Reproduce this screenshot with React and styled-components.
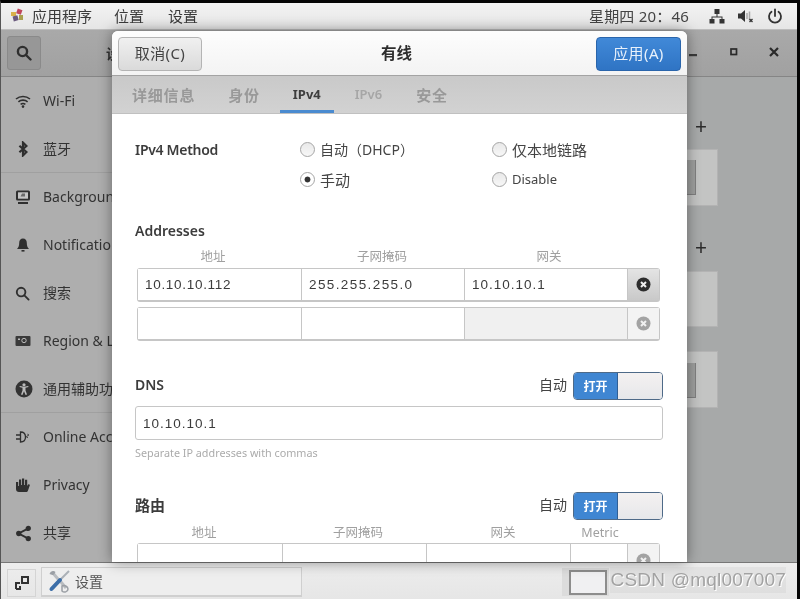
import React from "react";
import styled, { createGlobalStyle } from "styled-components";

const sans = `"Noto Sans", "Noto Sans CJK SC", sans-serif`;

const Global = createGlobalStyle`
  html, body { margin: 0; padding: 0; background: #000; }
  body { width: 800px; height: 599px; overflow: hidden; font-family: ${sans}; }
  * { box-sizing: border-box; }
`;

const Screen = styled.div`
  position: relative;
  width: 800px;
  height: 599px;
  display: flex;
  flex-direction: column;
  border-top: 3px solid #050505;
  border-right: 3px solid #050505;
  border-left: 1px solid #555;
  overflow: hidden;
  filter: blur(0.45px);
`;

const TopBar = styled.header`
  height: 27px;
  flex: none;
  display: flex;
  align-items: center;
  padding: 0 14px 2px 8px;
  color: #3a3a3a;
  font-size: 15px;
  background: linear-gradient(#f3f3f3, #e6e6e6);
  border-bottom: 1px solid #bdbdbd;
`;
const MenuItem = styled.span`
  margin-left: ${p => p.$gap}px;
`;
const Clock = styled.span`
  margin-left: auto;
  letter-spacing: 0.2px;
  color: #444;
`;
const TrayIcon = styled.span`
  display: flex;
  margin-left: ${p => p.$gap}px;
  margin-top: 2px;
`;

const Main = styled.div`
  position: relative;
  flex: 1;
  min-height: 0;
  display: flex;
  flex-direction: column;
  background: #a7a9a9;
`;
const WinHeader = styled.div`
  height: 47px;
  flex: none;
  display: flex;
  align-items: center;
  padding: 0 0 0 6px;
  background: linear-gradient(#a9a9a9, #a1a1a1);
  border-bottom: 1px solid #858585;
`;
const SearchBtn = styled.div`
  width: 34px;
  height: 34px;
  display: flex;
  align-items: center;
  justify-content: center;
  background: #979797;
  border: 1px solid #8a8a8a;
  border-radius: 3px;
`;
const WinTitle = styled.span`
  margin-left: 65px;
  font-size: 14px;
  font-weight: 700;
  color: #333;
`;
const WinControls = styled.div`
  margin-left: auto;
  display: grid;
  grid-template-columns: repeat(3, 40px);
  justify-items: center;
  margin-right: 3px;
  margin-top: -2px;
  color: #2e2e2e;
`;
const WinBody = styled.div`
  flex: 1;
  min-height: 0;
  display: flex;
`;
const Sidebar = styled.nav`
  width: 111px;
  flex: none;
  background: #aeaeae;
  color: #333;
  font-size: 14px;
`;
const SideItem = styled.div`
  height: 48px;
  display: flex;
  align-items: center;
  white-space: nowrap;
  padding-left: 14px;
  padding-bottom: 2px;
  border-bottom: ${p => (p.$sep ? "1px solid #a0a0a0" : "none")};
`;
const SideIcon = styled.span`
  width: 28px;
  flex: none;
  display: flex;
  margin-top: 2px;
`;
const Panel = styled.div`
  flex: 1;
  display: flex;
  flex-direction: column;
  align-items: flex-end;
  padding: 38px 79px 0 0;
`;
const Plus = styled.div`
  width: 34px;
  text-align: center;
  height: 22px;
  line-height: 22px;
  font-size: 21px;
  color: #2c2c2c;
  margin-top: ${p => p.$top}px;
`;
const GhostCard = styled.div`
  width: 100px;
  height: ${p => p.$h}px;
  margin-top: ${p => p.$top}px;
  background: #c3c4c3;
  border: 1px solid #b3b3b3;
  display: flex;
  justify-content: flex-end;
  align-items: flex-start;
  padding-top: ${p => p.$inner}px;
  padding-right: 21px;
`;
const GhostBtn = styled.div`
  width: 9px;
  height: 35px;
  background: #9e9f9e;
  border-right: 1px solid #808080;
  border-bottom: 1px solid #808080;
`;

const Dialog = styled.section`
  position: absolute;
  left: 111px;
  top: 1px;
  width: 575px;
  bottom: 0;
  background: #fff;
  border-radius: 6px 6px 0 0;
  box-shadow: 0 0 14px rgba(0, 0, 0, 0.42);
  overflow: hidden;
  color: #3a3a3a;
  font-size: 14px;
`;
const DlgHeader = styled.div`
  height: 45px;
  display: flex;
  align-items: center;
  justify-content: space-between;
  padding: 2px 6px 0 6px;
  background: linear-gradient(#fdfdfd, #f3f3f3);
  border-bottom: 1px solid #a3a3a3;
`;
const DlgTitle = styled.span`
  font-weight: 700;
  font-size: 15.5px;
  color: #2e2e2e;
  margin: -3px 5px 0 0;
`;
const DlgButton = styled.button`
  width: ${p => (p.$primary ? 85 : 84)}px;
  height: 34px;
  padding: 0 0 3px;
  font: inherit;
  font-size: 15px;
  letter-spacing: 0.4px;
  border-radius: 4px;
  color: ${p => (p.$primary ? "#e8f1fb" : "#444")};
  background: ${p => (p.$primary ? "linear-gradient(#4189d8, #2f74c4)" : "linear-gradient(#f0f0f0, #dadada)")};
  border: 1px solid ${p => (p.$primary ? "#2a65ab" : "#b4b4b4")};
`;
const Tabs = styled.div`
  height: 38px;
  display: flex;
  background: linear-gradient(#c9c9c9, #d2d2d2);
  border-bottom: 1px solid #c0c0c0;
  padding-left: 7px;
`;
const Tab = styled.div`
  display: flex;
  align-items: center;
  justify-content: center;
  padding: 2px ${p => p.$pad}px 0;
  font-size: ${p => (p.$cjk ? 15 : 13)}px;
  font-weight: ${p => (p.$active ? 700 : 600)};
  color: ${p => (p.$active ? "#3e3e3e" : p.$faint ? "#a6a6a6" : "#999")};
  border-bottom: ${p => (p.$active ? "3px solid #4a8bd0" : "3px solid transparent")};
  letter-spacing: ${p => (p.$cjk ? "0.8px" : 0)};
`;
const Body = styled.div`
  padding: 20px 24px 0 23px;
`;
const MethodGrid = styled.div`
  display: grid;
  grid-template-columns: 165px 192px 1fr;
  grid-auto-rows: 30px;
  align-items: center;
  margin-bottom: 27px;
`;
const FieldLabel = styled.div`
  font-weight: 600;
  font-size: ${p => p.$size || 14}px;
  letter-spacing: ${p => p.$track || 0}px;
  color: #3c3c3c;
`;
const RowLabel = styled(FieldLabel)`
  margin-bottom: 4px;
`;
const Radio = styled.label`
  display: flex;
  align-items: center;
  gap: 5px;
  font-size: ${p => p.$size || 14}px;
  color: #444;
`;
const RadioDot = styled.span`
  width: 15px;
  height: 15px;
  border-radius: 50%;
  border: 1px solid #a5a5a5;
  background: ${p => (p.$on ? "radial-gradient(circle, #333 0 2.6px, #fff 3.3px)" : "linear-gradient(#e9e9e9, #f7f7f7)")};
`;
const SectionTitle = styled(FieldLabel)`
  height: 20px;
  line-height: 20px;
`;
const Columns = styled.div`
  display: grid;
  grid-template-columns: ${p => p.$cols};
  margin: ${p => p.$top}px 3px ${p => p.$bottom}px 2px;
  height: 14px;
  line-height: 14px;
  font-size: 12.5px;
  color: #a0a0a0;
  text-align: center;
`;
const Row = styled.div`
  display: grid;
  grid-template-columns: ${p => p.$cols};
  height: ${p => p.$h || 34}px;
  margin: 0 3px ${p => (p.$last ? 0 : 5)}px 2px;
  border: 1px solid #c6c6c6;
  border-bottom-width: 2px;
  border-radius: 3px;
`;
const Cell = styled.div`
  display: flex;
  align-items: center;
  padding-left: 7px;
  font-family: "Liberation Sans", sans-serif;
  font-size: 13.5px;
  letter-spacing: ${p => p.$track || 0.7}px;
  color: #3b3b3b;
  border-right: 1px solid #c6c6c6;
  background: ${p => (p.$off ? "#f0f0f0" : "#fff")};
`;
const RemoveCell = styled.div`
  display: flex;
  align-items: ${p => (p.$top ? "flex-start" : "center")};
  padding-top: ${p => (p.$top ? 9 : 0)}px;
  justify-content: center;
  background: ${p => (p.$on ? "linear-gradient(#e4e4e4, #c9c9c9)" : "#f3f3f3")};
`;
const OptionRow = styled.div`
  display: flex;
  align-items: center;
  height: 28px;
  margin-top: ${p => p.$top}px;
`;
const Auto = styled.span`
  margin: 0 6px 4px auto;
  font-size: 14px;
  color: #444;
`;
const Switch = styled.div`
  width: 90px;
  height: 28px;
  display: flex;
  border: 1px solid #4e6a88;
  border-radius: 4px;
  overflow: hidden;
  font-size: 12px;
  font-weight: 700;
`;
const SwitchOn = styled.span`
  width: 44px;
  display: flex;
  align-items: center;
  justify-content: center;
  background: #3f86d2;
  color: #fff;
  border-right: 1px solid #2f5f95;
`;
const SwitchOff = styled.span`
  flex: 1;
  background: linear-gradient(#f4f1f1, #e6e7ea);
`;
const TextInput = styled.div`
  height: 34px;
  margin-top: 6px;
  display: flex;
  align-items: center;
  padding-left: 7px;
  border: 1px solid #c6c6c6;
  border-radius: 3px;
  font-family: "Liberation Sans", sans-serif;
  font-size: 13.5px;
  letter-spacing: 1px;
  color: #3b3b3b;
`;
const Hint = styled.div`
  height: 14px;
  line-height: 14px;
  margin-top: 6px;
  font-size: 10.8px;
  color: #ababab;
`;

const BottomBar = styled.footer`
  height: 37px;
  flex: none;
  display: flex;
  align-items: center;
  padding-left: 6px;
  background: linear-gradient(#ededed, #e6e6e6);
  border-top: 1px solid #777;
`;
const ShowDesktop = styled.div`
  width: 29px;
  height: 28px;
  display: flex;
  align-items: center;
  justify-content: center;
  border: 1px solid #d4d4d4;
  margin-top: 3px;
`;
const TaskItem = styled.div`
  width: 261px;
  height: 30px;
  margin-left: 5px;
  margin-top: 2px;
  display: flex;
  align-items: center;
  gap: 4px;
  padding: 0 0 2px 6px;
  font-size: 14px;
  color: #555;
  background: #eeeeee;
  border: 1px solid #cfcfcf;
  border-bottom-width: 2px;
`;
const Pager = styled.div`
  margin-left: auto;
  margin-right: 188px;
  width: 47px;
  height: 28px;
  margin-top: 2px;
  padding-left: 7px;
  background: #dcdcdc;
  display: flex;
  align-items: center;
`;
const PagerBox = styled.div`
  width: 38px;
  height: 25px;
  background: #f0f0f2;
  border: 2px solid #8d8d8d;
`;
const Watermark = styled.div`
  position: absolute;
  right: 11px;
  bottom: 6px;
  height: 26px;
  line-height: 26px;
  padding: 0 0 0 1px;
  font-family: "Liberation Sans", sans-serif;
  font-size: 19px;
  letter-spacing: 0.2px;
  color: #a2a2a2;
  background: rgba(190, 190, 190, 0.2);
  text-shadow: 1px 1px 0 #fff;
`;

const Dark = "#2f2f2f";

const SearchIcon = ({ size = 16, w = 2.4 }) => (
  <svg width={size} height={size} viewBox="0 0 16 16" fill="none" stroke={Dark} strokeWidth={w} strokeLinecap="round">
    <circle cx="6.5" cy="6.5" r="4.6" />
    <path d="M10 10l4.5 4.5" />
  </svg>
);
const WifiIcon = () => (
  <svg width="16" height="16" viewBox="0 0 16 16" fill="none" stroke={Dark} strokeWidth="1.6">
    <path d="M1 6c4-3.4 10-3.4 14 0M3.4 8.8c2.6-2.2 6.6-2.2 9.2 0M5.6 11.3c1.4-1 3.4-1 4.8 0" />
    <circle cx="8" cy="13.6" r="1.3" fill={Dark} stroke="none" />
  </svg>
);
const BluetoothIcon = () => (
  <svg width="16" height="16" viewBox="0 0 16 16" fill="none" stroke={Dark} strokeWidth="2.2">
    <path d="M4.4 4.8l7 6.2L8 14.4V1.6L11.4 5l-7 6.2" />
  </svg>
);
const MonitorIcon = () => (
  <svg width="16" height="16" viewBox="0 0 16 16">
    <rect x="1" y="1.5" width="14" height="10" rx="1.5" fill={Dark} />
    <rect x="3" y="3.3" width="10" height="6.4" fill="#c4c4c4" />
    <path d="M7 4.5h3v3H5.5z" fill="#6a6a6a" />
    <rect x="3" y="13" width="10" height="2" fill={Dark} />
  </svg>
);
const BellIcon = () => (
  <svg width="16" height="16" viewBox="0 0 16 16" fill={Dark}>
    <path d="M8 1.5c2.4 0 3.8 1.8 3.8 4.2 0 3 .7 4.6 2.2 6.3H2c1.5-1.7 2.2-3.3 2.2-6.3C4.2 3.3 5.6 1.5 8 1.5z" />
    <rect x="6.5" y="13" width="3" height="1.6" />
  </svg>
);
const RegionIcon = () => (
  <svg width="16" height="16" viewBox="0 0 16 16">
    <rect x="0.5" y="3" width="15" height="10" rx="1" fill="#3a3a3a" />
    <circle cx="9" cy="7.5" r="2.2" fill="none" stroke="#bbb" strokeWidth="1" />
    <rect x="3" y="5.5" width="2" height="1.5" fill="#bbb" />
  </svg>
);
const AccessIcon = () => (
  <svg width="18" height="18" viewBox="0 0 18 18">
    <circle cx="9" cy="9" r="8.5" fill="#333" />
    <circle cx="9" cy="4.8" r="1.6" fill="#bbb" />
    <path d="M4.5 7l3 .8v2.600L6 14.500l1.400.4L9 11.200l1.600 3.700 1.400-.4-1.500-4.100V7.800l3-.8-.3-1.100L9 6.800 4.800 5.900z" fill="#bbb" />
  </svg>
);
const PlugIcon = () => (
  <svg width="16" height="16" viewBox="0 0 16 16" fill="none" stroke={Dark} strokeWidth="1.3">
    <path d="M5.5 3v10c3.200 0 5-2.200 5-5s-1.800-5-5-5zM1 6h4.500M1 10h4.500" />
    <path d="M12.5 5.200c1.500 0 1.500 1.500 0 1.700s-1.300 1.800.3 1.700" strokeWidth="1" />
  </svg>
);
const HandIcon = () => (
  <svg width="16" height="16" viewBox="0 0 16 16" fill={Dark}>
    <path d="M1 5h2.200v4H4V2.500h2.200V8H7V1.500h2.200V8H10V2.800h2.200V9l1-1.800 1.800.6L13 13.500c-.4 1-1 1.500-2 1.500H4c-1.800 0-3-1-3-3z" />
  </svg>
);
const ShareIcon = () => (
  <svg width="17" height="17" viewBox="0 0 16 16" fill={Dark} stroke={Dark} strokeWidth="1.8">
    <path d="M12.5 3.200L3.500 8l9 4.800" fill="none" />
    <circle cx="12.5" cy="3.2" r="1.6" />
    <circle cx="3.5" cy="8" r="1.6" />
    <circle cx="12.5" cy="12.8" r="1.6" />
  </svg>
);
const RemoveIcon = ({ off }) => (
  <svg width="15" height="15" viewBox="0 0 15 15">
    <circle cx="7.5" cy="7.5" r="7" fill={off ? "#a3a3a3" : "#2d2d2d"} />
    <path d="M5 5l5 5M10 5l-5 5" stroke={off ? "#f0f0f0" : "#eee"} strokeWidth="2" />
  </svg>
);
const AppLogo = () => (
  <svg width="16" height="16" viewBox="0 0 16 16">
    <rect x="8" y="2" width="5" height="5" fill="#c0475c" transform="rotate(20 10 4)" />
    <rect x="2" y="5" width="5" height="4" fill="#d9b14a" />
    <rect x="4" y="9" width="5" height="5" fill="#6b5a7e" transform="rotate(-15 6 11)" />
    <rect x="10" y="8" width="4" height="5" fill="#a9a04e" />
  </svg>
);
const NetworkIcon = () => (
  <svg width="16" height="16" viewBox="0 0 16 16" fill="#333">
    <rect x="5.5" y="1" width="5" height="5" />
    <rect x="0.5" y="11" width="5" height="4.5" />
    <rect x="10.5" y="11" width="5" height="4.5" />
    <path d="M7.5 6h1v2.500H13.500V11h-1V9.500h-9V11h-1V8.500H7.500z" />
  </svg>
);
const VolumeIcon = () => (
  <svg width="18" height="16" viewBox="0 0 18 16">
    <path d="M1 5.500h3L8 2v12L4 10.500H1z" fill="#333" />
    <path d="M10 5v6M12.500 3.500v9" stroke="#aaa" strokeWidth="1.5" />
    <path d="M12.500 11l3 3M15.500 11l-3 3" stroke="#333" strokeWidth="1.3" />
  </svg>
);
const PowerIcon = () => (
  <svg width="16" height="16" viewBox="0 0 16 16" fill="none" stroke="#333" strokeWidth="1.8" strokeLinecap="round">
    <path d="M8 1.500v6.500" />
    <path d="M4.500 3.800a6 6 0 1 0 7 0" />
  </svg>
);
const MinIcon = () => <svg width="12" height="12" viewBox="0 0 12 12"><rect x="1" y="8" width="8" height="2.2" fill="#3a3a3a" /></svg>;
const MaxIcon = () => <svg width="12" height="12" viewBox="0 0 12 12"><rect x="3" y="3" width="5.5" height="5.5" fill="none" stroke="#2a2a2a" strokeWidth="1.7" /></svg>;
const CloseIcon = () => <svg width="12" height="12" viewBox="0 0 12 12"><path d="M2 2l8 8M10 2l-8 8" stroke="#2a2a2a" strokeWidth="2.2" /></svg>;
const DesktopIcon = () => (
  <svg width="16" height="16" viewBox="0 0 16 16">
    <rect x="8" y="2" width="6" height="6" fill="none" stroke="#333" strokeWidth="2" />
    <path d="M2 14V8h4M2 14h4V11" fill="none" stroke="#333" strokeWidth="2" />
  </svg>
);
const ToolsIcon = () => (
  <svg width="23" height="24" viewBox="0 0 23 24" fill="none">
    <path d="M4 3l6 7 3 3 5 6" stroke="#b9bcc0" strokeWidth="3" />
    <path d="M1.500 5c1-3 4-4 6-2L6 5.500 4.500 6z" fill="#9b9fa5" />
    <path d="M14 17c2-1 6 0 6 3s-4 4-6 2z" fill="none" stroke="#9b9fa5" strokeWidth="1.5" />
    <path d="M21 2L11 12" stroke="#aab0b6" strokeWidth="2" />
    <path d="M12 11L3.500 20" stroke="#3c6ea8" strokeWidth="4" strokeLinecap="round" />
  </svg>
);

const sideItems = [
  [<WifiIcon />, "Wi-Fi"],
  [<BluetoothIcon />, "蓝牙", true],
  [<MonitorIcon />, "Background"],
  [<BellIcon />, "Notifications"],
  [<SearchIcon size={15} w={2} />, "搜索"],
  [<RegionIcon />, "Region & Language"],
  [<AccessIcon />, "通用辅助功能", true],
  [<PlugIcon />, "Online Accounts"],
  [<HandIcon />, "Privacy"],
  [<ShareIcon />, "共享"],
];

const addrCols = "164px 163px 163px 1fr";
const routeCols = "145px 144px 144px 57px 1fr";

export default function App() {
  return (
    <>
      <Global />
      <Screen>
        <TopBar>
          <AppLogo />
          <MenuItem $gap={7}>应用程序</MenuItem>
          <MenuItem $gap={22}>位置</MenuItem>
          <MenuItem $gap={24}>设置</MenuItem>
          <Clock>星期四 20：46</Clock>
          <TrayIcon $gap={20}><NetworkIcon /></TrayIcon>
          <TrayIcon $gap={12}><VolumeIcon /></TrayIcon>
          <TrayIcon $gap={12}><PowerIcon /></TrayIcon>
        </TopBar>
        <Main>
          <WinHeader>
            <SearchBtn><SearchIcon /></SearchBtn>
            <WinTitle>设置</WinTitle>
            <WinControls>
              <MinIcon />
              <MaxIcon />
              <CloseIcon />
            </WinControls>
          </WinHeader>
          <WinBody>
            <Sidebar>
              {sideItems.map(([icon, label, sep]) => (
                <SideItem key={label} $sep={sep}>
                  <SideIcon>{icon}</SideIcon>
                  {label}
                </SideItem>
              ))}
            </Sidebar>
            <Panel>
              <Plus $top={0}>+</Plus>
              <GhostCard $top={12} $h={57} $inner={10}><GhostBtn /></GhostCard>
              <Plus $top={30}>+</Plus>
              <GhostCard $top={13} $h={56} $inner={0} />
              <GhostCard $top={24} $h={57} $inner={11}><GhostBtn /></GhostCard>
            </Panel>
          </WinBody>
          <Dialog>
            <DlgHeader>
              <DlgButton>取消(C)</DlgButton>
              <DlgTitle>有线</DlgTitle>
              <DlgButton $primary>应用(A)</DlgButton>
            </DlgHeader>
            <Tabs>
              <Tab $pad={13} $cjk>详细信息</Tab>
              <Tab $pad={20} $cjk>身份</Tab>
              <Tab $pad={13} $active>IPv4</Tab>
              <Tab $pad={21} $faint>IPv6</Tab>
              <Tab $pad={13} $cjk>安全</Tab>
            </Tabs>
            <Body>
              <MethodGrid>
                <FieldLabel $track={-0.3}>IPv4 Method</FieldLabel>
                <Radio><RadioDot />自动（DHCP）</Radio>
                <Radio $size={15}><RadioDot />仅本地链路</Radio>
                <span />
                <Radio $size={15}><RadioDot $on />手动</Radio>
                <Radio $size={13}><RadioDot />Disable</Radio>
              </MethodGrid>
              <SectionTitle>Addresses</SectionTitle>
              <Columns $cols="152px 186px 148px 1fr" $top={9} $bottom={4}>
                <span>地址</span><span>子网掩码</span><span>网关</span>
              </Columns>
              <Row $cols={addrCols}>
                <Cell>10.10.10.112</Cell>
                <Cell $track={1.4}>255.255.255.0</Cell>
                <Cell $track={1}>10.10.10.1</Cell>
                <RemoveCell $on><RemoveIcon /></RemoveCell>
              </Row>
              <Row $cols={addrCols} $last>
                <Cell />
                <Cell />
                <Cell $off />
                <RemoveCell><RemoveIcon off /></RemoveCell>
              </Row>
              <OptionRow $top={31}>
                <RowLabel>DNS</RowLabel>
                <Auto>自动</Auto>
                <Switch><SwitchOn>打开</SwitchOn><SwitchOff /></Switch>
              </OptionRow>
              <TextInput>10.10.10.1</TextInput>
              <Hint>Separate IP addresses with commas</Hint>
              <OptionRow $top={32}>
                <RowLabel $size={15}>路由</RowLabel>
                <Auto>自动</Auto>
                <Switch><SwitchOn>打开</SwitchOn><SwitchOff /></Switch>
              </OptionRow>
              <Columns $cols="134px 174px 116px 78px 1fr" $top={6} $bottom={3}>
                <span>地址</span><span>子网掩码</span><span>网关</span><span>Metric</span>
              </Columns>
              <Row $cols={routeCols} $h={40} $last>
                <Cell />
                <Cell />
                <Cell />
                <Cell />
                <RemoveCell $top><RemoveIcon off /></RemoveCell>
              </Row>
            </Body>
          </Dialog>
        </Main>
        <BottomBar>
          <ShowDesktop><DesktopIcon /></ShowDesktop>
          <TaskItem><ToolsIcon />设置</TaskItem>
          <Pager><PagerBox /></Pager>
        </BottomBar>
        <Watermark>CSDN @mql007007</Watermark>
      </Screen>
    </>
  );
}
